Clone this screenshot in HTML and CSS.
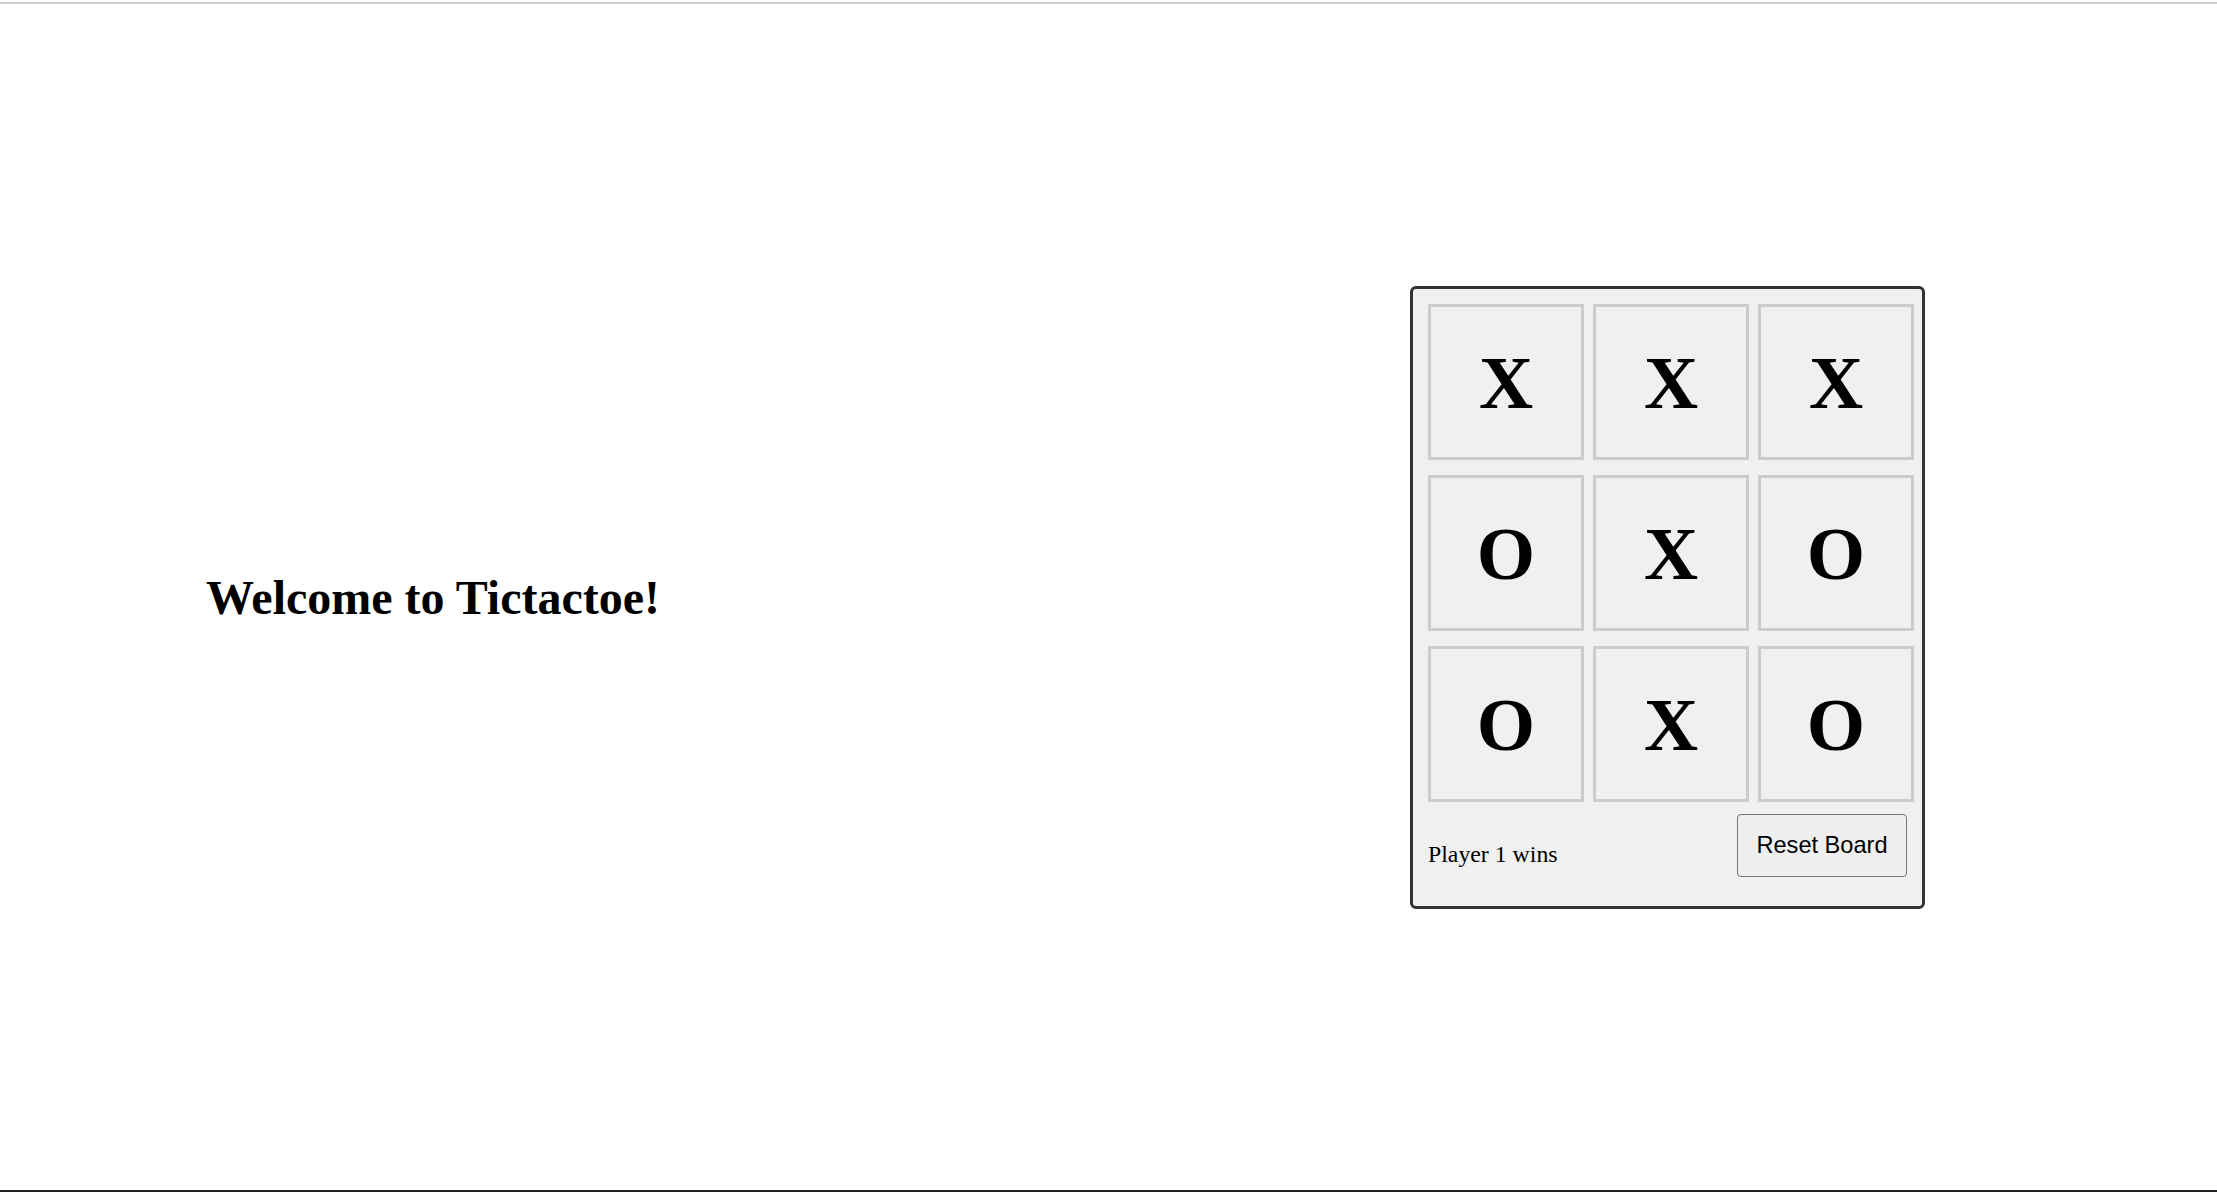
FILE: index.html
```html
<!DOCTYPE html>
<html lang="en">
<head>
<meta charset="utf-8">
<title>Tictactoe</title>
<link rel="stylesheet" href="styles.css">
</head>
<body>
<div class="page">
  <div class="topline"></div>
  <main class="main">
    <h1 class="title">Welcome to Tictactoe!</h1>
    <section class="board">
      <div class="grid">
        <div class="cell">X</div>
        <div class="cell">X</div>
        <div class="cell">X</div>
        <div class="cell">O</div>
        <div class="cell">X</div>
        <div class="cell">O</div>
        <div class="cell">O</div>
        <div class="cell">X</div>
        <div class="cell">O</div>
      </div>
      <div class="footer">
        <span class="status">Player 1 wins</span>
        <button class="reset" type="button">Reset Board</button>
      </div>
    </section>
  </main>
  <div class="bottomline"></div>
</div>
</body>
</html>
```
FILE: styles.css
```css
html, body {
  margin: 0;
  padding: 0;
  background: #ffffff;
}

.page {
  height: 1192px;
  box-sizing: border-box;
  padding-top: 2px;
  display: flex;
  flex-direction: column;
  font-family: "Liberation Serif", "Times New Roman", serif;
  color: #000;
}

.topline {
  height: 2px;
  background: #cccccc;
}

.bottomline {
  height: 2px;
  background: #222222;
}

.main {
  flex: 1;
  display: grid;
  grid-template-columns: 1204px auto;
  align-items: center;
  padding-left: 206px;
}

.title {
  margin: 0;
  font-size: 48px;
  font-weight: bold;
  line-height: 1.15;
  padding-top: 2px;
}

.board {
  width: 515px;
  box-sizing: border-box;
  margin-top: 1px;
  border: 3px solid #333333;
  border-radius: 6px;
  background: #f0f0f0;
  padding: 15px 8px 29px 15px;
}

.grid {
  display: grid;
  grid-template-columns: repeat(3, 156px);
  grid-auto-rows: 156px;
  column-gap: 9px;
  row-gap: 15px;
}

.cell {
  box-sizing: border-box;
  border: 3px solid #cccccc;
  background: #f0f0f0;
  display: flex;
  align-items: center;
  justify-content: center;
  font-size: 75px;
  font-weight: bold;
  line-height: 1;
}

.footer {
  display: flex;
  justify-content: space-between;
  align-items: flex-start;
  margin-right: 7px;
}

.status {
  margin-top: 39px;
  font-size: 23.8px;
  line-height: 26px;
}

.reset {
  margin-top: 12px;
  width: 170px;
  height: 63px;
  box-sizing: border-box;
  border: 1px solid #767676;
  border-radius: 4px;
  background: #efefef;
  font-family: "Liberation Sans", Arial, sans-serif;
  font-size: 23.6px;
  color: #000;
  padding: 0;
}
```
